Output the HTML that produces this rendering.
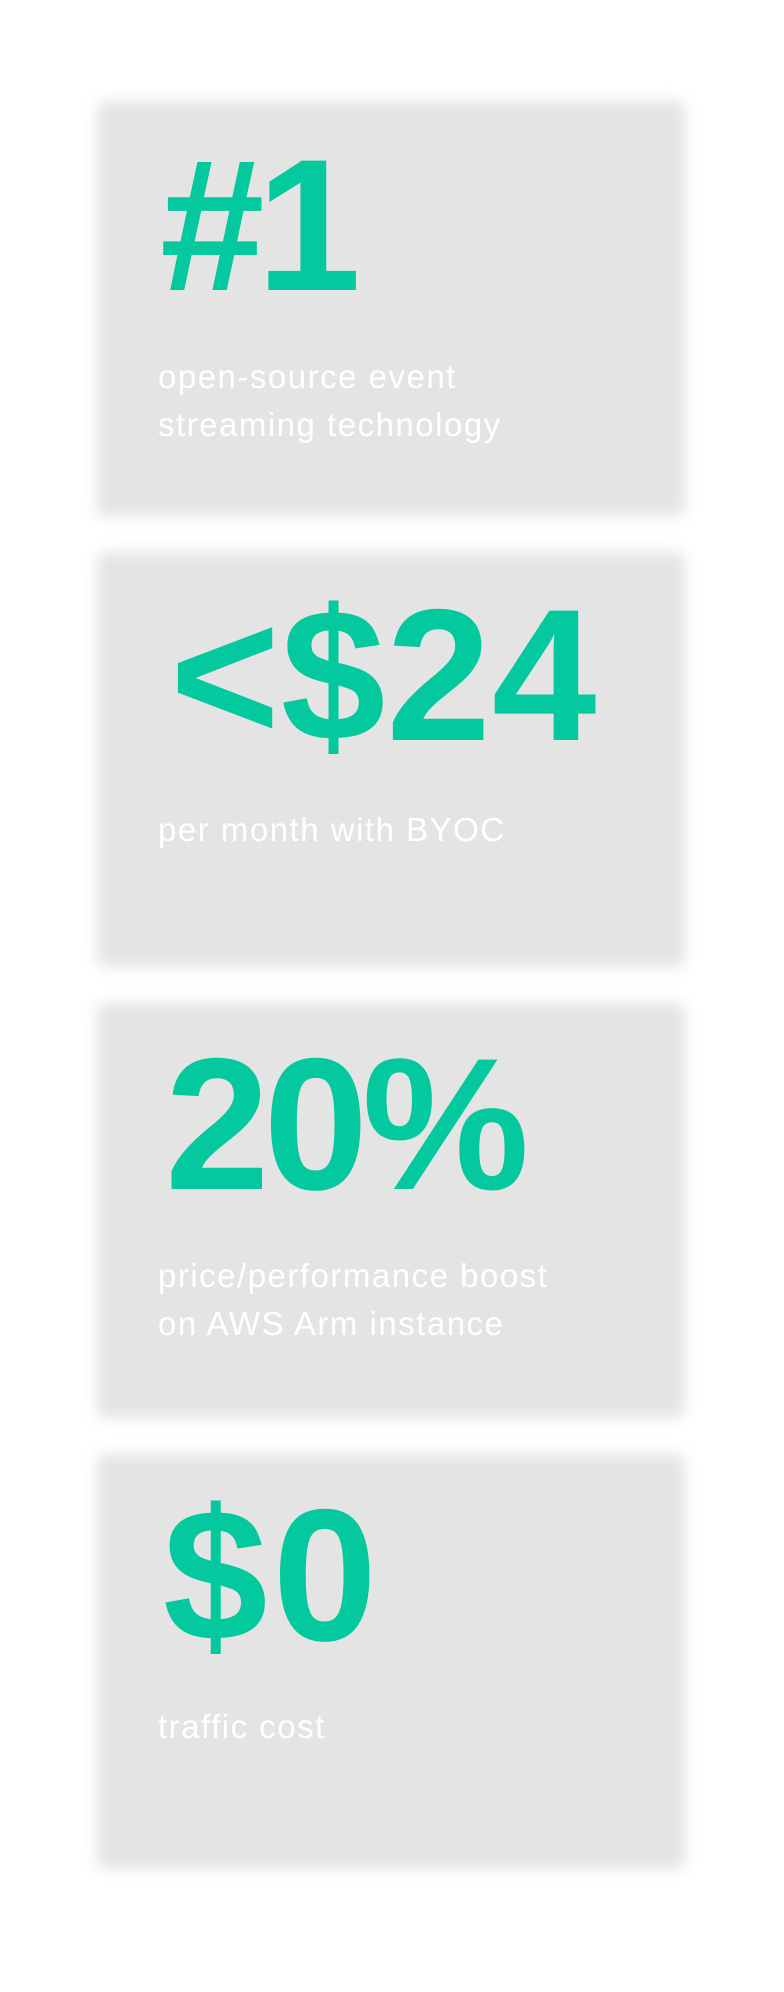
<!DOCTYPE html>
<html><head><meta charset="utf-8"><style>
html,body{margin:0;padding:0;background:#fff;width:784px;height:1992px;overflow:hidden;position:relative;font-family:"Liberation Sans",sans-serif}
.bg{position:absolute;left:97px;width:588px;height:415px;background:#e4e4e4;filter:blur(7px);border-radius:8px}
.num{position:absolute;color:#04c99f;font-size:188px;font-weight:700;line-height:1}
.txt{position:absolute;left:158px;color:#fff;font-size:33px;line-height:48px;letter-spacing:1.5px}
</style></head><body>
<div class="bg" style="top:101px"></div>
<div class="bg" style="top:552px"></div>
<div class="bg" style="top:1003px"></div>
<div class="bg" style="top:1454px"></div>

<div class="num" style="left:160px;top:131px;letter-spacing:-8px">#1</div>
<div class="txt" style="top:353px">open-source event<br>streaming technology</div>

<div class="num" style="left:170px;top:581px;letter-spacing:1px">&lt;$24</div>
<div class="txt" style="top:806px">per month with BYOC</div>

<div class="num" style="left:165px;top:1030px;letter-spacing:-6px">20%</div>
<div class="txt" style="top:1252px">price/performance boost<br>on AWS Arm instance</div>

<div class="num" style="left:163px;top:1481px;letter-spacing:5px">$0</div>
<div class="txt" style="top:1703px">traffic cost</div>
</body></html>
